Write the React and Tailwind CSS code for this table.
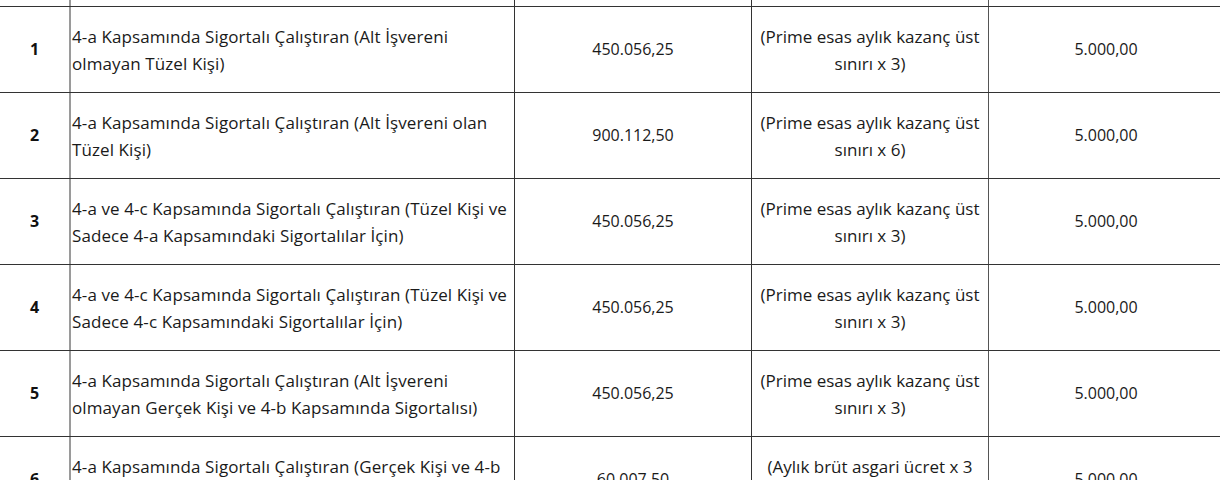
export default function App() {
  const rows = [
    {
      n: "1",
      desc: ["4-a Kapsamında Sigortalı Çalıştıran (Alt İşvereni", "olmayan Tüzel Kişi)"],
      amt: "450.056,25",
      note: ["(Prime esas aylık kazanç üst", "sınırı x 3)"],
      min: "5.000,00",
    },
    {
      n: "2",
      desc: ["4-a Kapsamında Sigortalı Çalıştıran (Alt İşvereni olan", "Tüzel Kişi)"],
      amt: "900.112,50",
      note: ["(Prime esas aylık kazanç üst", "sınırı x 6)"],
      min: "5.000,00",
    },
    {
      n: "3",
      desc: ["4-a ve 4-c Kapsamında Sigortalı Çalıştıran (Tüzel Kişi ve", "Sadece 4-a Kapsamındaki Sigortalılar İçin)"],
      amt: "450.056,25",
      note: ["(Prime esas aylık kazanç üst", "sınırı x 3)"],
      min: "5.000,00",
    },
    {
      n: "4",
      desc: ["4-a ve 4-c Kapsamında Sigortalı Çalıştıran (Tüzel Kişi ve", "Sadece 4-c Kapsamındaki Sigortalılar İçin)"],
      amt: "450.056,25",
      note: ["(Prime esas aylık kazanç üst", "sınırı x 3)"],
      min: "5.000,00",
    },
    {
      n: "5",
      desc: ["4-a Kapsamında Sigortalı Çalıştıran (Alt İşvereni", "olmayan Gerçek Kişi ve 4-b Kapsamında Sigortalısı)"],
      amt: "450.056,25",
      note: ["(Prime esas aylık kazanç üst", "sınırı x 3)"],
      min: "5.000,00",
    },
    {
      n: "6",
      desc: ["4-a Kapsamında Sigortalı Çalıştıran (Gerçek Kişi ve 4-b", "Kapsamında Sigortalı)"],
      amt: "60.007,50",
      note: ["(Aylık brüt asgari ücret x 3", "katı)"],
      min: "5.000,00",
    },
  ];

  return (
    <div
      className="w-[1220px] h-[480px] overflow-hidden bg-white text-[#1a1a1a] text-[17px] leading-[27px]"
      style={{ fontFamily: '"Open Sans", "Noto Sans", sans-serif' }}
    >
      <div className="flex h-[7px] border-b border-[#333]">
        <div className="w-[71px] shrink-0 border-r-2 border-[#9a9a9a]" />
        <div className="w-[444px] shrink-0 border-r border-[#333]" />
        <div className="w-[237px] shrink-0 border-r border-[#333]" />
        <div className="w-[237px] shrink-0 border-r border-[#555]" />
        <div className="flex-1" />
      </div>
      {rows.map((r) => (
        <div key={r.n} className="flex h-[86px] shrink-0 border-b border-[#333]">
          <div className="w-[71px] shrink-0 border-r-2 border-[#9a9a9a] flex items-center justify-center font-bold text-[16px] text-[#111]">
            {r.n}
          </div>
          <div className="w-[444px] shrink-0 border-r border-[#333] flex flex-col justify-center pl-[1px] whitespace-nowrap tracking-[0.1px]">
            {r.desc.map((l) => (
              <span key={l}>{l}</span>
            ))}
          </div>
          <div className="w-[237px] shrink-0 border-r border-[#333] flex items-center justify-center text-[16px]">
            {r.amt}
          </div>
          <div className="w-[237px] shrink-0 border-r border-[#555] flex flex-col items-center justify-center whitespace-nowrap">
            {r.note.map((l) => (
              <span key={l}>{l}</span>
            ))}
          </div>
          <div className="flex-1 flex items-center justify-center pl-[3px] text-[16px]">{r.min}</div>
        </div>
      ))}
    </div>
  );
}
